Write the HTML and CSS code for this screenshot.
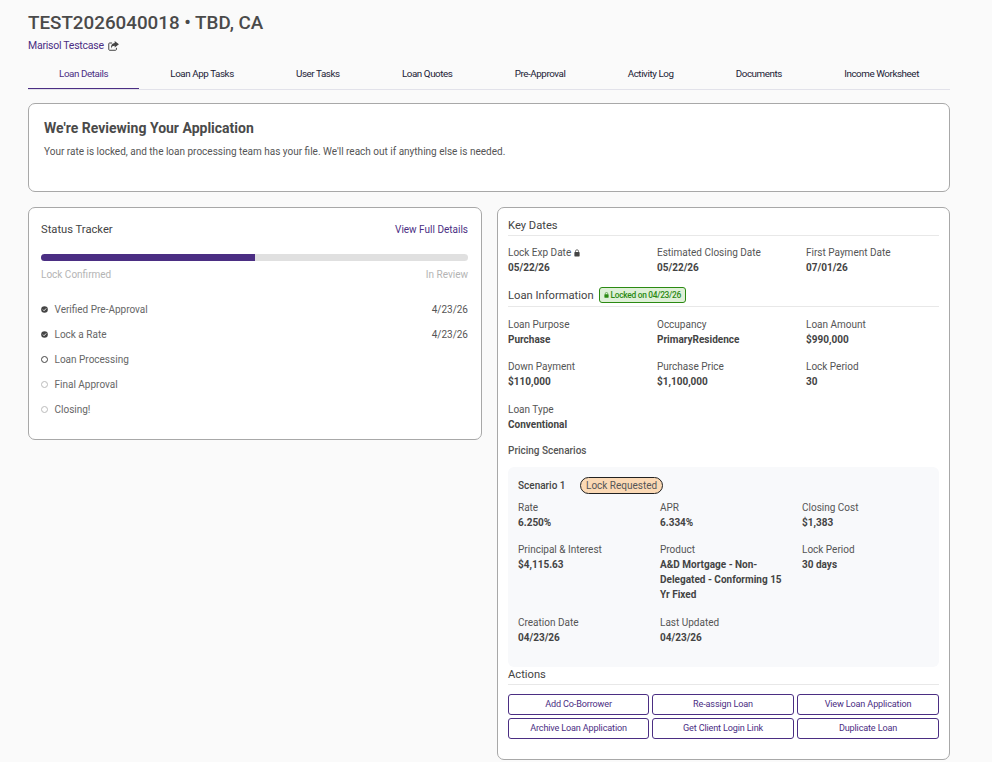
FILE: index.html
```html
<!DOCTYPE html>
<html lang="en">
<head>
<meta charset="utf-8">
<title>Loan Details</title>
<link rel="stylesheet" href="styles.css">
</head>
<body>
<main class="page">
  <h1 class="title">TEST2026040018 • TBD, CA</h1>
  <a class="borrower">Marisol Testcase
    <svg class="share" viewBox="0 0 12 11" width="11" height="10"><path d="M4.500 2.200H1.700a.9.9 0 0 0-.9.9v6.200c0 .5.4.9.9.9h6.600c.5 0 .9-.4.9-.9V7.500" fill="none" stroke="#444" stroke-width="1.100"/><path d="M7.300 0l4.700 3.600-4.700 3.600V5.200C5.300 5.200 4 5.900 3.500 8.200 2.800 4.700 4.700 2.200 7.300 2.100z" fill="#444"/></svg>
  </a>
  <nav class="tabs">
    <a class="tab active">Loan Details</a>
    <a class="tab">Loan App Tasks</a>
    <a class="tab">User Tasks</a>
    <a class="tab">Loan Quotes</a>
    <a class="tab">Pre-Approval</a>
    <a class="tab">Activity Log</a>
    <a class="tab">Documents</a>
    <a class="tab">Income Worksheet</a>
  </nav>
  <section class="banner card">
    <h2>We're Reviewing Your Application</h2>
    <p>Your rate is locked, and the loan processing team has your file. We'll reach out if anything else is needed.</p>
  </section>
  <div class="columns">
    <section class="card tracker">
      <div class="tracker-head">
        <h3>Status Tracker</h3>
        <a class="link">View Full Details</a>
      </div>
      <div class="bar"><div class="bar-fill" style="width:50%"></div></div>
      <div class="bar-labels"><span>Lock Confirmed</span><span>In Review</span></div>
      <ul class="steps">
        <li><svg class="step-icon" viewBox="0 0 8 8" width="8" height="8"><circle cx="4" cy="4" r="3.800" fill="#444"/><path d="M2.200 4.100l1.300 1.300 2.400-2.600" fill="none" stroke="#fff" stroke-width="1"/></svg><span class="step-name">Verified Pre-Approval</span><span class="step-date">4/23/26</span></li>
        <li><svg class="step-icon" viewBox="0 0 8 8" width="8" height="8"><circle cx="4" cy="4" r="3.800" fill="#444"/><path d="M2.200 4.100l1.300 1.300 2.400-2.600" fill="none" stroke="#fff" stroke-width="1"/></svg><span class="step-name">Lock a Rate</span><span class="step-date">4/23/26</span></li>
        <li><span class="dot current"></span><span class="step-name">Loan Processing</span></li>
        <li><span class="dot"></span><span class="step-name">Final Approval</span></li>
        <li><span class="dot"></span><span class="step-name">Closing!</span></li>
      </ul>
    </section>
    <section class="card details">
      <h3 class="section-head">Key Dates</h3>
      <div class="fields">
        <div class="field"><span class="label">Lock Exp Date <svg class="lock" viewBox="0 0 8 10" width="6" height="8"><path d="M2 4V2.700a2 2 0 0 1 4 0V4" fill="none" stroke="#444" stroke-width="1"/><rect x=".5" y="3.800" width="7" height="5.700" rx=".8" fill="#444"/></svg></span><span class="value">05/22/26</span></div>
        <div class="field"><span class="label">Estimated Closing Date</span><span class="value">05/22/26</span></div>
        <div class="field"><span class="label">First Payment Date</span><span class="value">07/01/26</span></div>
      </div>
      <h3 class="section-head loan-head">Loan Information
        <span class="locked"><svg viewBox="0 0 8 10" width="5" height="6"><path d="M2 4V2.700a2 2 0 0 1 4 0V4" fill="none" stroke="#2b8a12" stroke-width="1"/><rect x=".5" y="3.800" width="7" height="5.700" rx=".8" fill="#2b8a12"/></svg> Locked on 04/23/26</span>
      </h3>
      <div class="fields">
        <div class="field"><span class="label">Loan Purpose</span><span class="value">Purchase</span></div>
        <div class="field"><span class="label">Occupancy</span><span class="value">PrimaryResidence</span></div>
        <div class="field"><span class="label">Loan Amount</span><span class="value">$990,000</span></div>
        <div class="field"><span class="label">Down Payment</span><span class="value">$110,000</span></div>
        <div class="field"><span class="label">Purchase Price</span><span class="value">$1,100,000</span></div>
        <div class="field"><span class="label">Lock Period</span><span class="value">30</span></div>
        <div class="field"><span class="label">Loan Type</span><span class="value">Conventional</span></div>
      </div>
      <h4 class="pricing-head">Pricing Scenarios</h4>
      <div class="scenario">
        <div class="scenario-head"><span class="scenario-name">Scenario 1</span><span class="pill">Lock Requested</span></div>
        <div class="fields scenario-fields">
          <div class="field"><span class="label">Rate</span><span class="value">6.250%</span></div>
          <div class="field"><span class="label">APR</span><span class="value">6.334%</span></div>
          <div class="field"><span class="label">Closing Cost</span><span class="value">$1,383</span></div>
          <div class="field"><span class="label">Principal &amp; Interest</span><span class="value">$4,115.63</span></div>
          <div class="field"><span class="label">Product</span><span class="value">A&amp;D Mortgage - Non-Delegated - Conforming 15 Yr Fixed</span></div>
          <div class="field"><span class="label">Lock Period</span><span class="value">30 days</span></div>
          <div class="field"><span class="label">Creation Date</span><span class="value">04/23/26</span></div>
          <div class="field"><span class="label">Last Updated</span><span class="value">04/23/26</span></div>
        </div>
      </div>
      <h3 class="section-head actions-head">Actions</h3>
      <div class="actions">
        <button class="btn">Add Co-Borrower</button>
        <button class="btn">Re-assign Loan</button>
        <button class="btn">View Loan Application</button>
        <button class="btn">Archive Loan Application</button>
        <button class="btn">Get Client Login Link</button>
        <button class="btn">Duplicate Loan</button>
      </div>
    </section>
  </div>
</main>
</body>
</html>
```

FILE: styles.css
```css
* { box-sizing: border-box; }
html, body { margin: 0; height: 100%; overflow: hidden; }
body {
  background: #fafafa;
  color: #444;
  font-family: Roboto, "Liberation Sans", sans-serif;
  font-size: 10px;
}
.page { width: 922px; margin-left: 28px; padding-top: 12px; }
.title { margin: 0; font-size: 18.800px; line-height: 23px; font-weight: 500; color: #4a4a4a; }
.borrower { display: flex; align-items: center; gap: 4px; margin-top: 4px; height: 14px; color: #4b2e83; font-size: 10.500px; line-height: 14px; letter-spacing: -0.25px; }
.share { display: block; }
.tabs { display: flex; margin-top: 8px; border-bottom: 1px solid #e2e2ea; }
.tab { flex: 1 1 auto; padding: 0 31px 2px; height: 28px; line-height: 26px; white-space: nowrap; text-align: center; color: #212135; font-size: 9.800px; letter-spacing: -0.42px; border-bottom: 1px solid transparent; }
.tab.active { color: #4b2e83; border-bottom-color: #4b2e83; }
.card { background: #fff; border: 1px solid #a8a8a8; border-radius: 7px; }
.banner { margin-top: 13px; height: 89px; padding: 14px 15px; }
.banner h2 { margin: 0; font-size: 14px; line-height: 20px; font-weight: 700; color: #4a4a4a; }
.banner p { margin: 6px 0 0; font-size: 10px; line-height: 15px; color: #555; }
.columns { display: grid; grid-template-columns: 454px 453px; gap: 15px; align-items: start; margin-top: 15px; }
.tracker { height: 233px; padding: 13px 13px 0 12px; }
.tracker-head { display: flex; justify-content: space-between; align-items: center; height: 17px; }
.tracker-head h3 { margin: 0; font-size: 11.200px; font-weight: 400; color: #444; }
.link { color: #4b2e83; font-size: 10px; }
.bar { height: 7px; margin-top: 16px; border-radius: 4px; background: #e0e0e0; overflow: hidden; }
.bar-fill { height: 100%; background: #4b2e83; }
.bar-labels { display: flex; justify-content: space-between; margin-top: 6px; line-height: 15px; font-size: 10px; color: #b4b4b4; }
.steps { list-style: none; margin: 15px 0 0; padding: 0; }
.steps li { display: flex; align-items: center; height: 25px; font-size: 10px; color: #666; }
.step-icon, .dot { flex: none; width: 7px; height: 7px; margin-right: 6.500px; }
.dot { border: 1px solid #bbb; border-radius: 50%; }
.dot.current { border-color: #444; }
.step-name { flex: 1; }
.step-date { color: #555; }
.details { height: 553px; padding: 10px 10px 0; }
.section-head { margin: 0; padding-bottom: 2px; border-bottom: 1px solid #e8e8e8; font-size: 11.200px; line-height: 15px; font-weight: 400; color: #444; }
.loan-head { display: flex; align-items: center; gap: 5px; margin-top: 12px; padding-bottom: 3px; }
.locked { display: inline-flex; align-items: center; gap: 2px; height: 16px; padding: 0 4px; border: 1px solid #2b8a12; border-radius: 3px; background: #dff0d8; color: #2b8a12; font-size: 8.400px; letter-spacing: -0.3px; font-weight: 500; }
.fields { display: grid; grid-template-columns: repeat(3, 149px); row-gap: 12.400px; margin-top: 9px; }
.loan-head + .fields { margin-top: 10px; }
.field { display: flex; flex-direction: column; padding-right: 12px; }
.label { line-height: 15px; font-size: 10px; color: #555; }
.lock { vertical-align: -1px; }
.value { line-height: 15px; font-size: 10px; font-weight: 700; color: #444; }
.pricing-head { margin: 11px 0 0; font-size: 10px; line-height: 15px; font-weight: 500; color: #555; }
.scenario { height: 200px; margin-top: 9px; padding: 10px 10px 0; background: #f8f9fb; border-radius: 6px; }
.scenario-head { display: flex; align-items: center; height: 17px; }
.scenario-name { width: 62px; font-size: 10px; font-weight: 500; color: #444; }
.pill { height: 17px; padding: 0 5px; border: 1px solid #222; border-radius: 9px; background: #fbd9b5; color: #555; font-size: 10px; line-height: 15px; }
.scenario-fields { grid-template-columns: repeat(3, 142px); margin-top: 6px; }
.actions-head { margin-top: 0; }
.actions { display: grid; grid-template-columns: 141px 142px 142px; gap: 3px; margin-top: 9px; }
.btn { height: 21px; padding: 0; border: 1px solid #4b2e83; border-radius: 3px; background: #fff; color: #4b2e83; font-family: inherit; font-size: 9.100px; letter-spacing: -0.15px; }
```
